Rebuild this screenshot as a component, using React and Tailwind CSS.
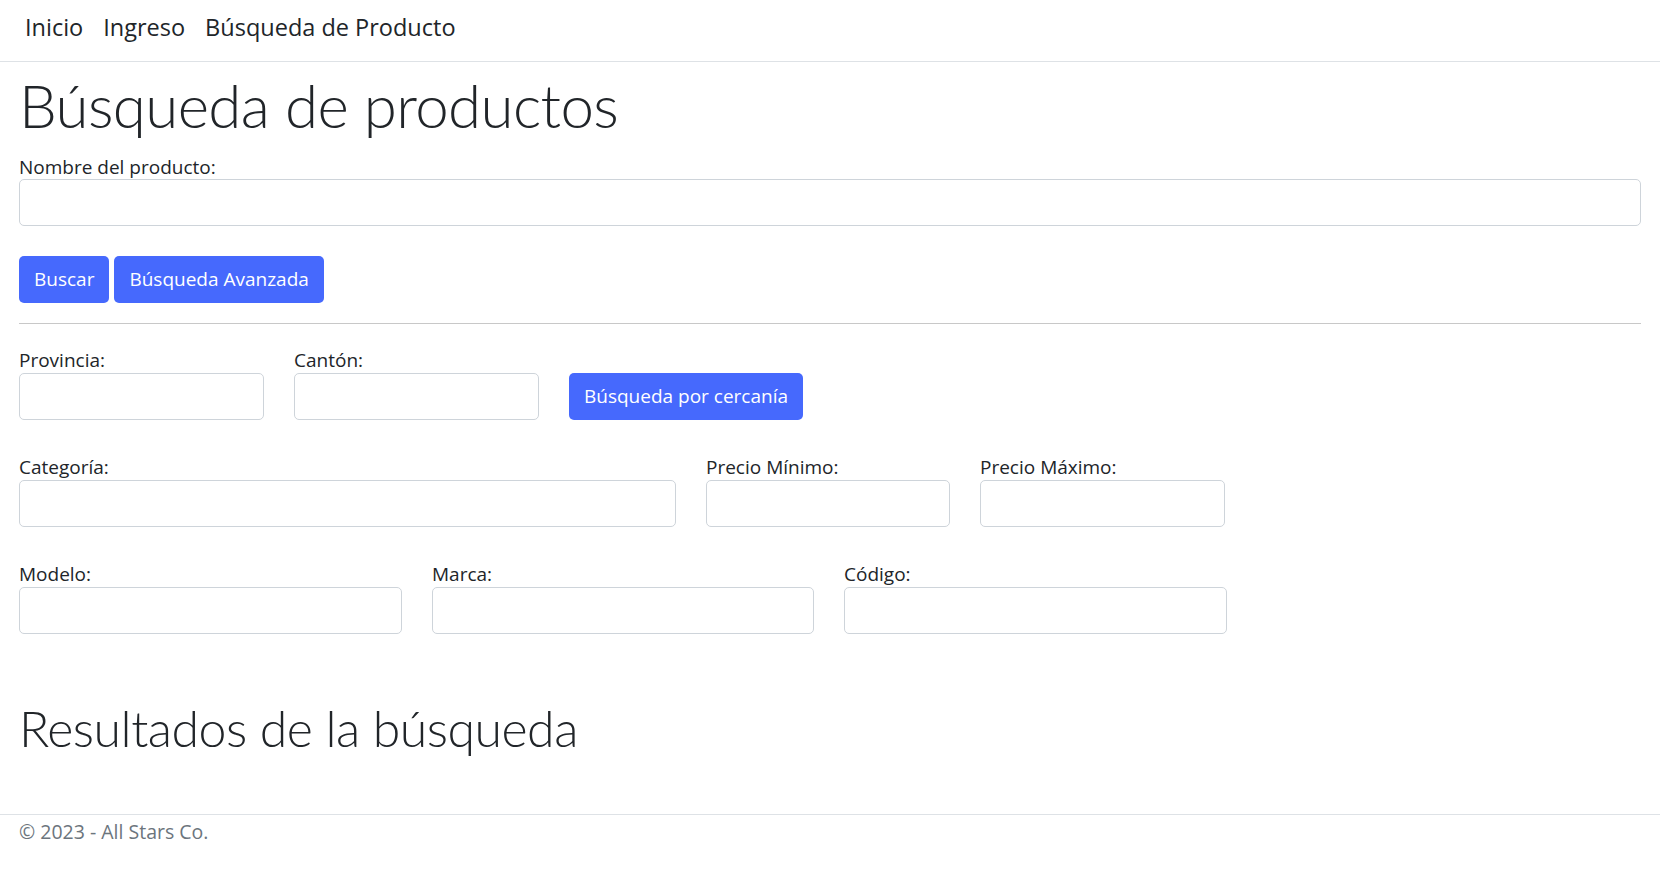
import React from "react";

const field = "block h-[47px] rounded-[5px] border border-[#ced4da] bg-white px-3 outline-none";
const label = "block text-[19px] leading-[24px] text-[#212529]";
const btn = "h-[47px] rounded-[5px] bg-[#4669fd] px-[15px] text-[19px] text-white";

const Field = ({ name, width }) => (
  <div className={width}>
    <label className={label}>{name}</label>
    <input type="text" className={`${field} mt-[1px] w-full`} />
  </div>
);

const App = () => {
  return (
    <div className="min-h-[885px] bg-white font-['Open_Sans',sans-serif] text-[#212529]">
      <nav className="flex h-[62px] items-center gap-[20px] border-b border-[#dee2e6] px-[25px] pb-[6px] text-[23.5px]">
        <a href="#">Inicio</a>
        <a href="#">Ingreso</a>
        <a href="#">Búsqueda de Producto</a>
      </nav>

      <main className="px-[19px]">
        <h1 className="mt-[3px] font-['Lato',sans-serif] text-[60px] font-light leading-[80px] tracking-[-0.01em]">
          Búsqueda de productos
        </h1>

        <label className={`${label} mt-[10px]`}>Nombre del producto:</label>
        <input type="text" className={`${field} w-full`} />

        <div className="mt-[30px] flex gap-[5px]">
          <button className={btn}>Buscar</button>
          <button className={btn}>Búsqueda Avanzada</button>
        </div>

        <hr className="mt-[20px] border-t border-[#c8c8c8]" />

        <div className="mt-[24px] flex items-end gap-[30px]">
          <Field name="Provincia:" width="w-[245px]" />
          <Field name="Cantón:" width="w-[245px]" />
          <button className={`${btn} px-[14px]`}>Búsqueda por cercanía</button>
        </div>

        <div className="mt-[35px] flex gap-[30px]">
          <Field name="Categoría:" width="w-[657px]" />
          <Field name="Precio Mínimo:" width="w-[244px]" />
          <Field name="Precio Máximo:" width="w-[245px]" />
        </div>

        <div className="mt-[35px] flex gap-[30px]">
          <Field name="Modelo:" width="w-[383px]" />
          <Field name="Marca:" width="w-[382px]" />
          <Field name="Código:" width="w-[383px]" />
        </div>

        <h2 className="mt-[54px] font-['Lato',sans-serif] text-[50px] font-light leading-[80px] tracking-[-0.01em]">
          Resultados de la búsqueda
        </h2>
      </main>

      <footer className="mt-[46px] border-t border-[#dee2e6] px-[19px] pt-[2px] text-[19.5px] text-[#6c757d]">
        © 2023 - All Stars Co.
      </footer>
    </div>
  );
};

export default App;
